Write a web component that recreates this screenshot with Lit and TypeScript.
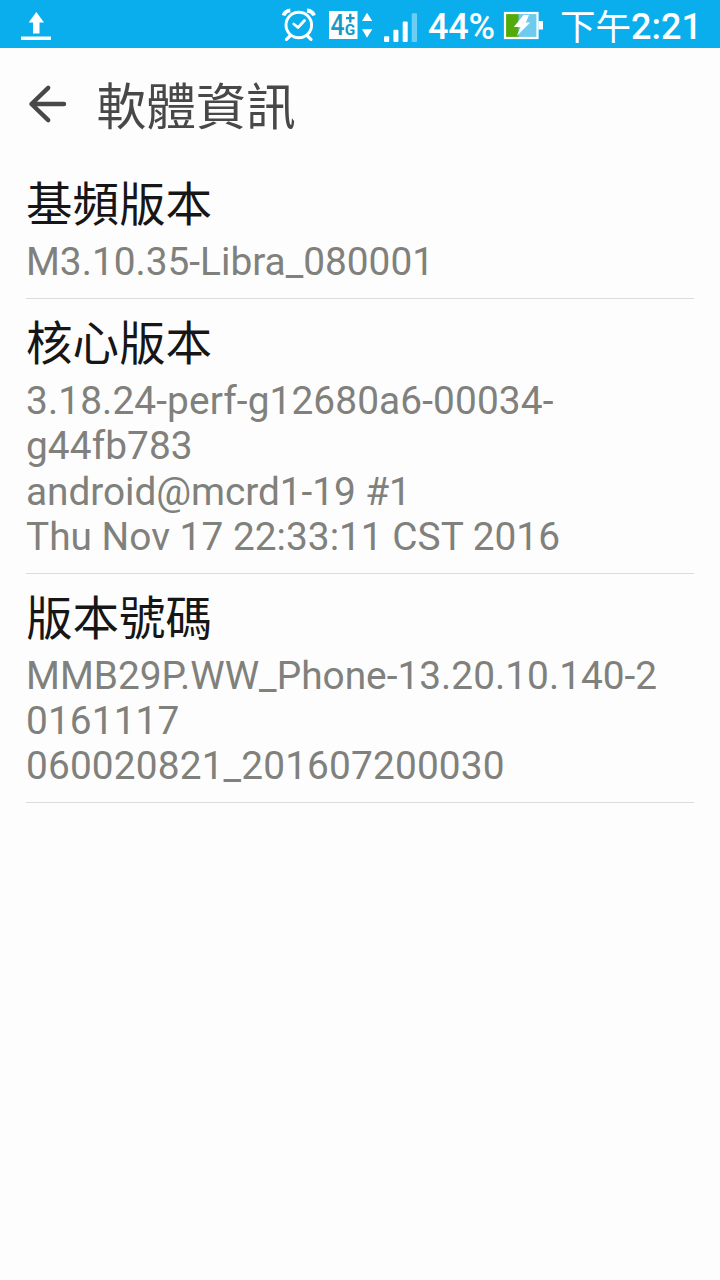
import { LitElement, html, css } from "lit";
import { customElement, property } from "lit/decorators.js";
import { styleMap } from "lit/directives/style-map.js";

@customElement("status-bar")
class StatusBar extends LitElement {
  static styles = css`
    :host { display: flex; align-items: flex-start; height: 48px; background: #0aaeec; color: #fff;
      font-family: Roboto, "Noto Sans CJK TC", sans-serif; box-sizing: border-box; }
    svg { display: block; flex: none; }
    .upload { margin-right: auto; }
    .pct { width: 73px; padding: 6px 0 0 1px; font-size: 36px; line-height: 42px; font-weight: 500; white-space: nowrap; letter-spacing: -0.2px; box-sizing: border-box; }
    .time { width: 160px; font-size: 36px; white-space: nowrap; display: flex; align-items: flex-start; }
    .ampm { font-family: "Noto Sans CJK TC", sans-serif; font-weight: 400; font-size: 35.5px; line-height: 50px; width: 71px; }
    .clock { padding-top: 6px; line-height: 42px; font-weight: 500; }
    .net { font-family: Roboto, sans-serif; }
  `;
  render() {
    return html`
      <svg class="upload" width="60" height="48" fill="#fff">
        <path d="M36.3 12 L44 22.5 H39.5 V33.5 H33 V22.5 H28.7 Z" />
        <rect x="21" y="36.5" width="30" height="3.5" />
      </svg>
      <svg width="157" height="48" viewBox="270 0 157 48">
        <g fill="none" stroke="#fff" stroke-linecap="round" stroke-linejoin="round">
          <circle cx="298.8" cy="25" r="12.8" stroke-width="2.9" />
          <path d="M293.8 24 L298 27.5 L304.5 20.5" stroke-width="2.8" />
          <path d="M290 36 L286.5 39.3 M307.5 36 L311 39.3" stroke-width="3.2" />
          <path d="M283.6 15.5 Q285 11 290.3 10.5 M307 10.5 Q312.5 11 314 15.5" stroke-width="3.8" stroke-linecap="butt" />
        </g>
        <rect x="329" y="11" width="28.5" height="28" fill="#fff" />
        <g class="net" fill="#139bc9">
          <text x="330.5" y="35.3" font-size="29" font-weight="500" textLength="14" lengthAdjust="spacingAndGlyphs">4</text>
          <text x="344.8" y="35.3" font-size="14" font-weight="700" textLength="10.5" lengthAdjust="spacingAndGlyphs">G</text>
          <path d="M346 16.9h3.1v-3.2h2.4v3.2h3.1v2.3h-3.1v3.2h-2.4v-3.2H346z" />
        </g>
        <path d="M367 12.8 L372.3 21 H362 Z M367 37.8 L372.3 29.3 H362 Z" fill="#fff" />
        <g fill="#fff">
          <rect x="384" y="36.3" width="5.2" height="5.7" rx="1" />
          <rect x="393.4" y="29.8" width="5" height="12.2" rx="1" />
          <rect x="402.7" y="21.5" width="5" height="20.5" rx="1" />
          <rect x="411.7" y="13.2" width="5.3" height="28.8" rx="1" opacity=".4" />
        </g>
      </svg>
      <span class="pct">44%</span>
      <svg width="60" height="48" viewBox="500 0 60 48">
        <rect x="505" y="13" width="32.5" height="25" fill="#6dcbee" />
        <rect x="505" y="13" width="13.5" height="25" fill="#52ab0a" />
        <rect x="505" y="13" width="32.5" height="25" fill="none" stroke="#fff" stroke-width="2.2" />
        <rect x="538.5" y="21" width="4.5" height="8.5" fill="#fff" />
        <path d="M523.5 15 H529 L525.8 22.6 H530.2 L516.8 36 L520.6 27 H513.8 Z" fill="#fff" />
      </svg>
      <span class="time"><span class="ampm">下午</span><span class="clock">2:21</span></span>
    `;
  }
}

@customElement("page-header")
class PageHeader extends LitElement {
  static styles = css`
    :host { display: flex; height: 112.2px; color: #484848; }
    svg { flex: none; display: block; }
    .title { font: 400 49.8px/110px "Noto Sans CJK TC", sans-serif; white-space: nowrap; }
  `;
  render() {
    return html`
      <svg width="96.5" height="112" viewBox="0 48 96.5 112" fill="none" stroke="currentColor" stroke-width="4.4" stroke-linecap="round" stroke-linejoin="round">
        <path d="M48.2 87.8 L31.5 104 L48.2 120.2 M31.5 104 H64" />
      </svg>
      <span class="title">軟體資訊</span>
    `;
  }
}

interface Line { text: string; tracking: number; }

@customElement("info-row")
class InfoRow extends LitElement {
  @property() heading = "";
  @property({ attribute: false }) lines: Line[] = [];
  static styles = css`
    :host { display: block; margin: 0 26px; padding: 10.2px 0 13.4px; border-bottom: 1px solid #dcdcdc; }
    .heading { margin-bottom: 6.9px; font: 400 46.5px/62px "Noto Sans CJK TC", sans-serif; color: #161616; white-space: nowrap; }
    .line { font: 400 38.8px/45.3px Roboto, sans-serif; color: #80807c; white-space: nowrap; }
  `;
  render() {
    return html`
      <div class="heading">${this.heading}</div>
      ${this.lines.map((l) => html`<div class="line" style=${styleMap({ letterSpacing: `${l.tracking}px` })}>${l.text}</div>`)}
    `;
  }
}

const ROWS: { heading: string; lines: Line[] }[] = [
  { heading: "基頻版本", lines: [{ text: "M3.10.35-Libra_080001", tracking: 0 }] },
  {
    heading: "核心版本",
    lines: [
      { text: "3.18.24-perf-g12680a6-00034-", tracking: 0.11 },
      { text: "g44fb783", tracking: 0.08 },
      { text: "android@mcrd1-19 #1", tracking: -0.06 },
      { text: "Thu Nov 17 22:33:11 CST 2016", tracking: 0.02 },
    ],
  },
  {
    heading: "版本號碼",
    lines: [
      { text: "MMB29P.WW_Phone-13.20.10.140-2", tracking: 0.02 },
      { text: "0161117", tracking: 0.12 },
      { text: "060020821_201607200030", tracking: 0.15 },
    ],
  },
];

@customElement("app-root")
class AppRoot extends LitElement {
  static styles = css`
    :host { display: block; width: 720px; height: 1280px; background: #fdfdfd; overflow: hidden; }
  `;
  render() {
    return html`
      <status-bar></status-bar>
      <page-header></page-header>
      ${ROWS.map((r) => html`<info-row .heading=${r.heading} .lines=${r.lines}></info-row>`)}
    `;
  }
}
